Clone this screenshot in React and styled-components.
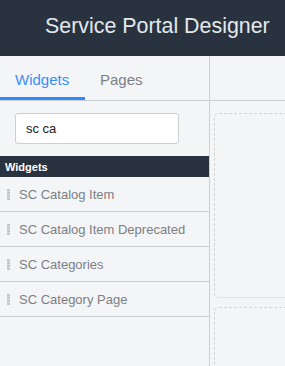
import React from "react";
import styled, { createGlobalStyle } from "styled-components";

const GlobalStyle = createGlobalStyle`
  html, body {
    margin: 0;
    padding: 0;
    background: #f4f5f7;
    font-family: "Liberation Sans", Arial, sans-serif;
  }
`;

const Page = styled.div`
  width: 285px;
  height: 366px;
  overflow: hidden;
  display: flex;
  flex-direction: column;
  background: #f4f5f7;
`;

const Header = styled.div`
  height: 56px;
  flex-shrink: 0;
  background: #28333f;
  display: flex;
  align-items: center;
  padding: 0 0 3px 45px;
  box-sizing: border-box;
  color: #e4e8ec;
  font-size: 21.4px;
  white-space: nowrap;
`;

const Body = styled.div`
  flex: 1;
  display: flex;
  min-height: 0;
`;

const Sidebar = styled.div`
  width: 209px;
  flex-shrink: 0;
  border-right: 1px solid #cdd0d3;
  display: flex;
  flex-direction: column;
`;

const Tabs = styled.div`
  height: 44px;
  border-bottom: 1px solid #cdd0d3;
  display: flex;
  align-items: stretch;
`;

const Tab = styled.div`
  padding: 6px 15px 0 15px;
  min-width: ${(p) => (p.$active ? "55px" : "auto")};
  display: flex;
  align-items: center;
  font-size: 15px;
  color: ${(p) => (p.$active ? "#3a8ff5" : "#7d8085")};
  border-bottom: 3px solid ${(p) => (p.$active ? "#2d8cf5" : "transparent")};
`;

const SearchWrap = styled.div`
  padding: 12px 0 12px 15px;
`;

const Search = styled.div`
  width: 164px;
  height: 31px;
  box-sizing: border-box;
  background: #fff;
  border: 1px solid #cdd0d3;
  border-radius: 3px;
  display: flex;
  align-items: center;
  padding-left: 10px;
  font-size: 13px;
  color: #222;
`;

const SectionTitle = styled.div`
  height: 21px;
  background: #28333f;
  color: #fff;
  font-size: 11px;
  font-weight: bold;
  display: flex;
  align-items: center;
  padding-left: 5px;
`;

const Item = styled.div`
  height: 35px;
  box-sizing: border-box;
  border-bottom: 1px solid #cdd0d3;
  display: flex;
  align-items: center;
  padding: 1px 0 0 7px;
  font-size: 13px;
  color: #7b7f84;
  white-space: nowrap;
`;

const Handle = styled.span`
  width: 3px;
  height: 11px;
  margin-right: 9px;
  background: repeating-linear-gradient(
    to bottom,
    #c4c6c8 0 2px,
    #d8dadc 2px 3px
  );
`;

const Canvas = styled.div`
  flex: 1;
  display: flex;
  flex-direction: column;
`;

const CanvasBar = styled.div`
  height: 44px;
  flex-shrink: 0;
  border-bottom: 1px solid #cdd0d3;
`;

const Drop = styled.div`
  margin: ${(p) => p.$top}px 0 0 4px;
  height: ${(p) => p.$h}px;
  flex-shrink: 0;
  border: 1px dashed #d2d4d6;
  border-right: none;
  border-bottom: 1px solid #dce3df;
  border-radius: 5px 0 0 5px;
`;

const widgets = [
  "SC Catalog Item",
  "SC Catalog Item Deprecated",
  "SC Categories",
  "SC Category Page",
];

export default function App() {
  return (
    <Page>
      <GlobalStyle />
      <Header>Service Portal Designer</Header>
      <Body>
        <Sidebar>
          <Tabs>
            <Tab $active>Widgets</Tab>
            <Tab>Pages</Tab>
          </Tabs>
          <SearchWrap>
            <Search>sc ca</Search>
          </SearchWrap>
          <SectionTitle>Widgets</SectionTitle>
          {widgets.map((w) => (
            <Item key={w}>
              <Handle />
              {w}
            </Item>
          ))}
        </Sidebar>
        <Canvas>
          <CanvasBar />
          <Drop $top={12} $h={183} />
          <Drop $top={9} $h={80} />
        </Canvas>
      </Body>
    </Page>
  );
}
